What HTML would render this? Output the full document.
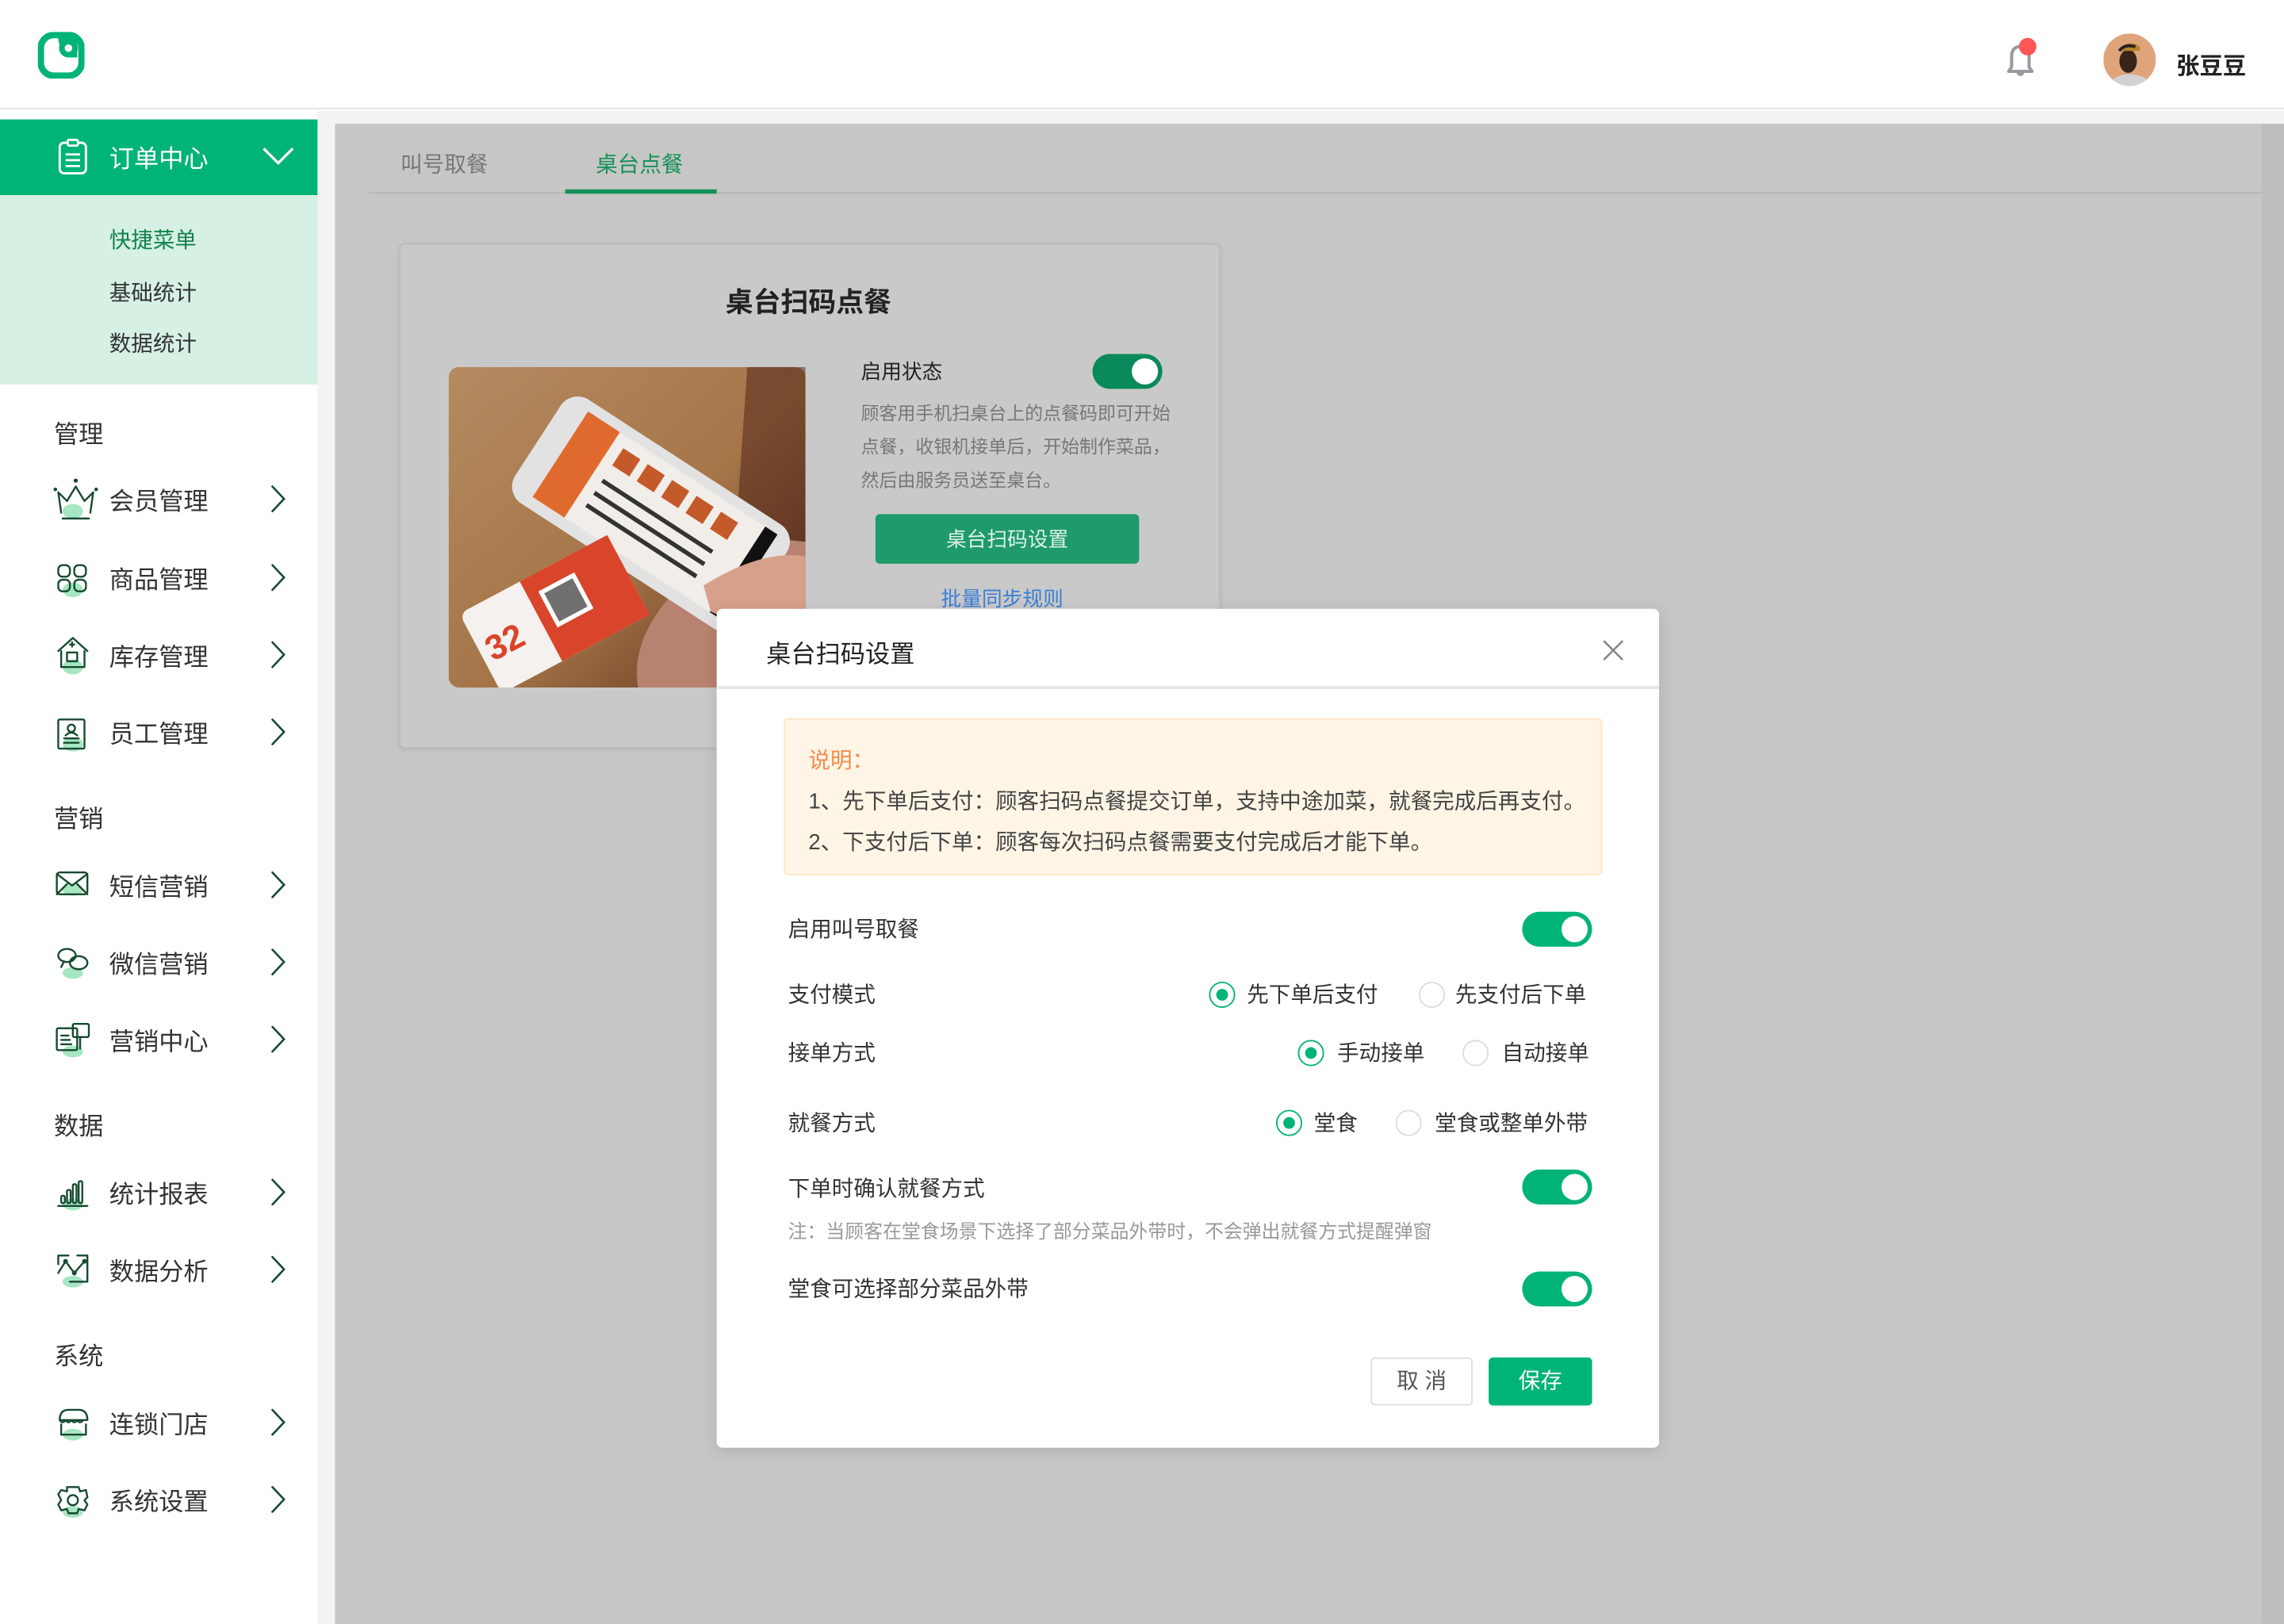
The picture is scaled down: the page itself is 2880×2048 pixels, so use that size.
<!DOCTYPE html>
<html><head><meta charset="utf-8">
<style>
*{margin:0;padding:0;box-sizing:border-box}
html,body{width:2880px;height:2048px;overflow:hidden;background:#fff}
body{font-family:"Liberation Sans","Noto Sans CJK SC",sans-serif}
#w{position:absolute;left:0;top:0;width:1568px;height:1115px;transform:scale(1.83674);transform-origin:0 0;background:#fff}
.a{position:absolute}
.t{position:absolute;white-space:nowrap}
.side .t{font-size:17px;color:#333}
.sec{font-size:17px;color:#222}
.tog{position:absolute;width:48px;height:24px;border-radius:12px;background:#00b377}
.tog::after{content:"";position:absolute;right:3px;top:3px;width:18px;height:18px;border-radius:50%;background:#fff}
.lbl{position:absolute;left:541px;font-size:15px;color:#333;white-space:nowrap}
.rad{position:absolute;width:18px;height:18px;border-radius:50%;border:1px solid #ddd;background:#fff}
.rad.on{border:1.5px solid #00b377}
.rad.on::after{content:"";position:absolute;left:3.5px;top:3.5px;width:8px;height:8px;border-radius:50%;background:#00b377}
.rt{position:absolute;font-size:15px;color:#333;white-space:nowrap}
</style></head><body><div id="w">
<div class="a" style="left:0;top:0;width:1568px;height:75px;background:#fff;border-bottom:1px solid #e3e3e8"></div>
<svg class="a" style="left:26px;top:22px" width="32" height="32" viewBox="0 0 32 32"><rect x="2" y="2" width="28" height="28" rx="9" fill="none" stroke="#00b377" stroke-width="4.5"/><circle cx="21" cy="11" r="6.5" fill="#00b377"/><circle cx="21" cy="11" r="2.6" fill="#fff"/><path d="M14 4 Q14 11 21 17.5 L27 17.5 L27 4 Z" fill="#00b377"/><circle cx="21" cy="11" r="2.6" fill="#fff"/></svg>
<svg class="a" style="left:1372px;top:24px" width="32" height="32" viewBox="0 0 32 32"><path d="M7 25 L9 22 L9 15 Q9 8 15 8 Q21 8 21 15 L21 22 L23 25 Z" fill="none" stroke="#9a9aa0" stroke-width="2.2" stroke-linejoin="round"/><path d="M13 26 Q15 29 17 26" fill="#9a9aa0" stroke="#9a9aa0" stroke-width="1.5"/><circle cx="20" cy="8" r="6" fill="#ff5555"/></svg>
<svg class="a" style="left:1444px;top:23px" width="36" height="36" viewBox="0 0 36 36"><defs><clipPath id="cc"><circle cx="18" cy="18" r="18"/></clipPath></defs><g clip-path="url(#cc)"><rect width="36" height="36" fill="#dfa47a"/><ellipse cx="18" cy="36" rx="14" ry="8" fill="#d2d2d6"/><ellipse cx="17" cy="19" rx="6" ry="8" fill="#3a2418"/><path d="M10 12 Q17 3 25 9 L25 12 Z" fill="#b9822e"/><path d="M11 12 Q14 7 22 9" stroke="#222" stroke-width="2" fill="none"/></g></svg>
<div class="t" style="left:1494px;top:32px;font-size:16px;color:#222;font-weight:bold">张豆豆</div>
<div class="a" style="left:218px;top:76px;width:1350px;height:1039px;background:#f3f3f3"></div>
<div class="a" style="left:230px;top:85px;width:1338px;height:1030px;background:#c6c6c6"></div>
<div class="a" style="left:1553px;top:85px;width:15px;height:1030px;background:#bdbdbd"></div>
<div class="t" style="left:275px;top:102px;font-size:15px;color:#777">叫号取餐</div>
<div class="t" style="left:409px;top:102px;font-size:15px;color:#149257">桌台点餐</div>
<div class="a" style="left:253px;top:132px;width:1300px;height:1px;background:#b5b5b5"></div>
<div class="a" style="left:388px;top:130px;width:104px;height:3px;background:#149257"></div>
<div class="a" style="left:274px;top:167px;width:564px;height:347px;background:#c9c9c9;border:1px solid #bbb;border-radius:4px;box-shadow:0 1px 3px rgba(0,0,0,.08)"></div>
<div class="t" style="left:498px;top:193px;font-size:19px;color:#222;font-weight:bold">桌台扫码点餐</div>
<svg class="a" style="left:308px;top:252px" width="245" height="220" viewBox="0 0 245 220"><defs><linearGradient id="wd" x1="0" y1="0" x2="1" y2="1"><stop offset="0" stop-color="#b48a60"/><stop offset=".55" stop-color="#a57548"/><stop offset="1" stop-color="#5a2d1a"/></linearGradient></defs><rect width="245" height="220" rx="7" fill="url(#wd)"/><path d="M205 0 L245 0 L245 220 L190 220 Z" fill="#4a1d14" opacity=".5"/><path d="M150 160 Q170 110 245 120 L245 220 L130 220 Q125 190 150 160Z" fill="#b88270"/><g transform="rotate(33 130 110)"><rect x="40" y="55" width="185" height="85" rx="14" fill="#e2e2e2"/><rect x="58" y="62" width="145" height="70" fill="#f1ede8"/><rect x="58" y="62" width="26" height="70" fill="#e06a2e"/><g fill="#c45a2a"><rect x="92" y="70" width="14" height="14"/><rect x="112" y="70" width="14" height="14"/><rect x="132" y="70" width="14" height="14"/><rect x="152" y="70" width="14" height="14"/><rect x="172" y="70" width="14" height="14"/></g><g fill="#333"><rect x="92" y="95" width="90" height="3"/><rect x="92" y="105" width="90" height="3"/><rect x="92" y="115" width="90" height="3"/></g><rect x="203" y="62" width="10" height="70" fill="#111"/></g><g transform="rotate(-28 70 170)"><rect x="15" y="140" width="115" height="62" rx="6" fill="#f4f1ee"/><rect x="62" y="140" width="68" height="62" fill="#d9452a"/><rect x="70" y="152" width="28" height="28" fill="#fff"/><rect x="73" y="155" width="22" height="22" fill="#333" opacity=".7"/><text x="20" y="180" font-size="24" font-weight="bold" fill="#d9452a" font-family="Liberation Sans">32</text></g><path d="M175 150 Q215 125 245 130 L245 185 Q205 180 180 168Z" fill="#d7a08a"/></svg>
<div class="t" style="left:591px;top:245px;font-size:14px;color:#222">启用状态</div>
<div class="tog" style="left:750px;top:243px;background:#0a8a5a"></div>
<div class="a" style="left:591px;top:273px;width:224px;font-size:12.5px;color:#777;line-height:23px">顾客用手机扫桌台上的点餐码即可开始点餐，收银机接单后，开始制作菜品，然后由服务员送至桌台。</div>
<div class="a" style="left:601px;top:353px;width:181px;height:34px;background:#1e9a6b;border-radius:3px;color:#dff2ea;font-size:14px;text-align:center;line-height:34px">桌台扫码设置</div>
<div class="t" style="left:646px;top:401px;font-size:14px;color:#3b7fd6">批量同步规则</div>
<div class="side">
<div class="a" style="left:0;top:82px;width:218px;height:52px;background:#00b377"></div>
<svg class="a" style="left:39px;top:95px" width="22" height="26" viewBox="0 0 22 26"><rect x="2" y="3" width="18" height="21" rx="3" fill="none" stroke="#fff" stroke-width="1.6"/><rect x="7.5" y="1" width="7" height="4" rx="1" fill="#00b377" stroke="#fff" stroke-width="1.5"/><path d="M6 11h10M6 15h10M6 19h10" stroke="#fff" stroke-width="1.5"/></svg>
<div class="t" style="left:75px;top:95px;font-size:17px;color:#fff">订单中心</div>
<svg class="a" style="left:180px;top:100px" width="22" height="14" viewBox="0 0 22 14"><path d="M1 2 L11 12 L21 2" fill="none" stroke="#fff" stroke-width="1.8"/></svg>
<div class="a" style="left:0;top:134px;width:218px;height:130px;background:#d6f1e3"></div>
<div class="t" style="left:75px;top:154px;font-size:15px;color:#14824c">快捷菜单</div>
<div class="t" style="left:75px;top:190px;font-size:15px;color:#333">基础统计</div>
<div class="t" style="left:75px;top:225px;font-size:15px;color:#333">数据统计</div>
<div class="a" style="left:218px;top:85px;width:12px;height:1030px;background:#f3f3f3"></div>
<div class="t sec" style="left:37px;top:284px">管理</div>
<div class="t sec" style="left:37px;top:548px">营销</div>
<div class="t sec" style="left:37px;top:759px">数据</div>
<div class="t sec" style="left:37px;top:917px">系统</div>
<div class="t" style="left:75px;top:330px">会员管理</div>
<div class="t" style="left:75px;top:384px">商品管理</div>
<div class="t" style="left:75px;top:437px">库存管理</div>
<div class="t" style="left:75px;top:490px">员工管理</div>
<div class="t" style="left:75px;top:595px">短信营销</div>
<div class="t" style="left:75px;top:648px">微信营销</div>
<div class="t" style="left:75px;top:701px">营销中心</div>
<div class="t" style="left:75px;top:806px">统计报表</div>
<div class="t" style="left:75px;top:859px">数据分析</div>
<div class="t" style="left:75px;top:964px">连锁门店</div>
<div class="t" style="left:75px;top:1017px">系统设置</div>
<svg class="a" style="left:0;top:0" width="218" height="1115" viewBox="0 0 218 1115">
<g fill="#a6e6c3"><ellipse cx="50" cy="351" rx="7" ry="5"/><ellipse cx="50" cy="405" rx="7" ry="5"/><ellipse cx="50" cy="458" rx="7" ry="5"/><ellipse cx="50" cy="511" rx="7" ry="5"/><ellipse cx="50" cy="611" rx="7" ry="4"/><ellipse cx="50" cy="668" rx="7" ry="4"/><ellipse cx="50" cy="722" rx="7" ry="4"/><ellipse cx="50" cy="827" rx="7" ry="4"/><ellipse cx="50" cy="880" rx="7" ry="4"/><ellipse cx="50" cy="985" rx="7" ry="4"/><ellipse cx="50" cy="1038" rx="7" ry="4"/></g>
<g fill="none" stroke="#174a30" stroke-width="1.3" stroke-linejoin="round" stroke-linecap="round">
<path d="M42 352 L40 338 L46 344 L52 334 L58 344 L64 338 L62 352"/><path d="M43 356 H61"/><circle cx="52" cy="330" r=".8" fill="#174a30"/><circle cx="38" cy="336" r=".6"/><circle cx="66" cy="336" r=".6"/>
<rect x="40" y="388" width="8" height="8" rx="3"/><rect x="51" y="388" width="8" height="8" rx="3"/><rect x="40" y="398" width="8" height="8" rx="3"/><rect x="51" y="398" width="8" height="8" rx="3"/>
<path d="M40 447 L50 438 L60 447"/><path d="M42 447 V458 H58 V447"/><rect x="46" y="448" width="7" height="6"/><path d="M49.5 441 v3 M48 442.5 h3"/>
<rect x="40" y="494" width="18" height="20" rx="1"/><circle cx="49" cy="500" r="2.5"/><path d="M44 507 H54 M44 510 H54 M45 505 Q49 501 53 505"/>
<rect x="39" y="599" width="21" height="15" rx="2"/><path d="M39 600 L49.5 608 L60 600 M39 614 L46 607 M60 614 L53 607"/>
<ellipse cx="46" cy="656" rx="6" ry="4.5"/><ellipse cx="54" cy="661" rx="6" ry="4.5"/><path d="M44 660 L42 664"/>
<rect x="39" y="706" width="14" height="15" rx="1"/><rect x="50" y="703" width="11" height="9" rx="1"/><path d="M42 711 H47 M42 714 H48 M42 717 H49 M55 712 V720"/>
<path d="M40 828 H60"/><rect x="42" y="821" width="2.5" height="5" rx="1"/><rect x="46" y="817" width="2.5" height="9" rx="1"/><rect x="50" y="813" width="2.5" height="13" rx="1"/><rect x="54" y="811" width="2.5" height="15" rx="1"/>
<path d="M40 868 V862 H47 M53 862 H60 V880 H48 M40 874 L45 866 L51 874 L58 866"/><circle cx="45" cy="866" r="1"/><circle cx="51" cy="874" r="1"/><circle cx="58" cy="866" r="1"/>
<path d="M41 975 Q41 968 47 968 H54 Q60 968 60 975 M41 975 H60 M41 975 Q43 978 45 975 Q47 978 49 975 Q51 978 53 975 Q55 978 57 975 M42 978 V985 H59 V978"/>
<path d="M46 1021 H54 L55 1024 L59 1023 L60 1028 L58 1030 L60 1033 L58 1037 L54 1036 L53 1039 H47 L46 1036 L42 1037 L40 1033 L42 1030 L40 1026 L42 1023 L46 1024 Z"/><circle cx="50" cy="1030" r="3.5"/>
</g>
<g fill="none" stroke="#174a30" stroke-width="1.4" stroke-linecap="round">
<path d="M187 334 L195 342.5 L187 351"/><path d="M187 388 L195 396.5 L187 405"/><path d="M187 441 L195 449.5 L187 458"/><path d="M187 494 L195 502.5 L187 511"/><path d="M187 599 L195 607.5 L187 616"/><path d="M187 652 L195 660.5 L187 669"/><path d="M187 705 L195 713.5 L187 722"/><path d="M187 810 L195 818.5 L187 827"/><path d="M187 863 L195 871.5 L187 880"/><path d="M187 968 L195 976.5 L187 985"/><path d="M187 1021 L195 1029.5 L187 1038"/>
</g></svg>
</div>
<div class="a" style="left:492px;top:418px;width:647px;height:576px;background:#fff;border-radius:4px;box-shadow:0 2px 10px rgba(0,0,0,.12)"></div>
<div class="t" style="left:526px;top:435px;font-size:17px;color:#222">桌台扫码设置</div>
<svg class="a" style="left:1099px;top:438px" width="17" height="17" viewBox="0 0 17 17"><path d="M2 2 L15 15 M15 2 L2 15" stroke="#888" stroke-width="1.4"/></svg>
<div class="a" style="left:492px;top:471px;width:647px;height:1.5px;background:#e5e5e5"></div>
<div class="a" style="left:538px;top:493px;width:562px;height:108px;background:#fef5e6;border:1px solid #fde8c2;border-radius:3px"></div>
<div class="t" style="left:555px;top:511px;font-size:15px;color:#f5894a">说明：</div>
<div class="t" style="left:555px;top:539px;font-size:15px;color:#444">1、先下单后支付：顾客扫码点餐提交订单，支持中途加菜，就餐完成后再支付。</div>
<div class="t" style="left:555px;top:567px;font-size:15px;color:#444">2、下支付后下单：顾客每次扫码点餐需要支付完成后才能下单。</div>
<div class="lbl" style="top:627px">启用叫号取餐</div>
<div class="tog" style="left:1045px;top:626px"></div>
<div class="lbl" style="top:672px">支付模式</div>
<div class="rad on" style="left:830px;top:674px"></div><div class="rt" style="left:856px;top:672px">先下单后支付</div>
<div class="rad" style="left:974px;top:674px"></div><div class="rt" style="left:999px;top:672px">先支付后下单</div>
<div class="lbl" style="top:712px">接单方式</div>
<div class="rad on" style="left:891px;top:714px"></div><div class="rt" style="left:918px;top:712px">手动接单</div>
<div class="rad" style="left:1004px;top:714px"></div><div class="rt" style="left:1031px;top:712px">自动接单</div>
<div class="lbl" style="top:760px">就餐方式</div>
<div class="rad on" style="left:876px;top:762px"></div><div class="rt" style="left:902px;top:760px">堂食</div>
<div class="rad" style="left:958px;top:762px"></div><div class="rt" style="left:985px;top:760px">堂食或整单外带</div>
<div class="lbl" style="top:805px">下单时确认就餐方式</div>
<div class="tog" style="left:1045px;top:803px"></div>
<div class="t" style="left:541px;top:835px;font-size:13px;color:#999">注：当顾客在堂食场景下选择了部分菜品外带时，不会弹出就餐方式提醒弹窗</div>
<div class="lbl" style="top:874px">堂食可选择部分菜品外带</div>
<div class="tog" style="left:1045px;top:873px"></div>
<div class="a" style="left:941px;top:932px;width:70px;height:33px;border:1px solid #ddd;border-radius:3px;font-size:15px;color:#555;text-align:center;line-height:31px">取 消</div>
<div class="a" style="left:1022px;top:932px;width:71px;height:33px;background:#00b377;border-radius:3px;font-size:15px;color:#fff;text-align:center;line-height:33px">保存</div>
</div></body></html>
